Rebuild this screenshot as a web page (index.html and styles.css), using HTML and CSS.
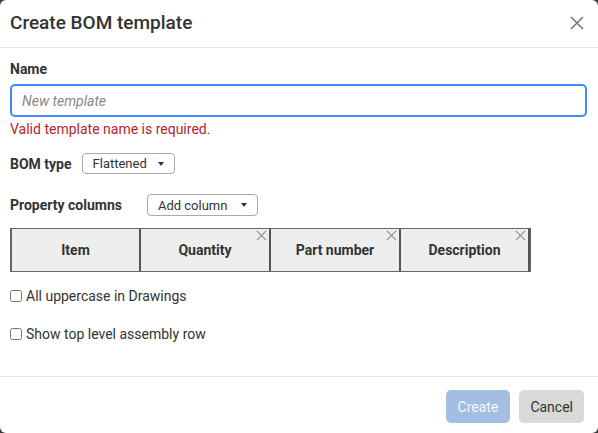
FILE: index.html
```html
<!DOCTYPE html>
<html lang="en">
<head>
    <meta charset="UTF-8">
    <title>Create BOM template</title>
    <link rel="stylesheet" href="styles.css">
</head>
<body>
    <div class="dialog">
        <div class="dialog-header">
            <h1>Create BOM template</h1>
            <button class="close-btn" type="button" aria-label="Close">
                <svg width="14" height="14" viewBox="0 0 14 14"><path d="M1 1L13 13M13 1L1 13" stroke="#777" stroke-width="1.6" fill="none"/></svg>
            </button>
        </div>

        <div class="dialog-body">
            <label class="field-label" for="template-name">Name</label>
            <input type="text" id="template-name" class="text-input" placeholder="New template">
            <div class="error-message">Valid template name is required.</div>

            <div class="inline-row bom-row">
                <span class="field-label">BOM type</span>
                <button type="button" class="dropdown-btn">Flattened <span class="caret"></span></button>
            </div>

            <div class="inline-row columns-row">
                <span class="field-label">Property columns</span>
                <button type="button" class="dropdown-btn add-col">Add column <span class="caret"></span></button>
            </div>

            <div class="columns-table">
                <div class="col-cell">Item</div>
                <div class="col-cell">Quantity<span class="remove-col"></span></div>
                <div class="col-cell">Part number<span class="remove-col"></span></div>
                <div class="col-cell">Description<span class="remove-col"></span></div>
            </div>

            <label class="check-row first">
                <input type="checkbox"> All uppercase in Drawings
            </label>
            <label class="check-row">
                <input type="checkbox"> Show top level assembly row
            </label>
        </div>

        <div class="dialog-footer">
            <button type="button" class="btn btn-primary" disabled>Create</button>
            <button type="button" class="btn btn-secondary">Cancel</button>
        </div>
    </div>
</body>
</html>
```

FILE: styles.css
```css
* {
    margin: 0;
    padding: 0;
    box-sizing: border-box;
    font-family: Roboto, 'Noto Sans', sans-serif;
}

body {
    background: #3a3a3a;
    width: 598px;
    height: 433px;
    overflow: hidden;
}

.dialog {
    width: 598px;
    height: 433px;
    background: #fff;
    border-radius: 6px;
    display: flex;
    flex-direction: column;
    color: #333;
}

.dialog-header {
    height: 48px;
    display: flex;
    align-items: center;
    justify-content: space-between;
    padding: 0 14px 2px 10px;
    border-bottom: 1px solid #e4e4e4;
}

.dialog-header h1 {
    font-size: 19px;
    font-weight: 500;
    color: #333;
}

.close-btn {
    background: none;
    border: none;
    display: flex;
    cursor: pointer;
}

.dialog-body {
    flex: 1;
    padding: 13px 11px 0 10px;
    display: flex;
    flex-direction: column;
    align-items: flex-start;
}

.field-label {
    font-size: 14px;
    font-weight: 700;
    color: #333;
}

.text-input {
    width: 100%;
    height: 33px;
    margin-top: 7px;
    padding: 0 10px;
    border: 2px solid #3d8bf7;
    border-radius: 5px;
    font-size: 14px;
    outline: none;
}

.text-input::placeholder {
    font-style: italic;
    color: #888;
}

.error-message {
    color: #b5232e;
    font-size: 14px;
    margin-top: 4px;
}

.inline-row {
    display: flex;
    align-items: center;
}

.bom-row {
    margin-top: 16px;
    gap: 10px;
}

.columns-row {
    margin-top: 20px;
    gap: 25px;
}

.dropdown-btn {
    display: flex;
    align-items: center;
    gap: 11px;
    background: #fff;
    border: 1px solid #aaa;
    border-radius: 4px;
    padding: 0 10px;
    height: 21px;
    font-size: 13px;
    color: #333;
}

.add-col {
    height: 22px;
    gap: 14px;
}

.caret {
    border-left: 3px solid transparent;
    border-right: 3px solid transparent;
    border-top: 4px solid #333;
}

.columns-table {
    display: flex;
    margin-top: 12px;
    border: 1px solid #666;
    border-left-width: 2px;
    background: #eeeeee;
}

.col-cell {
    position: relative;
    width: 130px;
    height: 42px;
    display: flex;
    align-items: center;
    justify-content: center;
    font-size: 14px;
    font-weight: 700;
    color: #333;
    border-right: 2px solid #555;
}

.col-cell:first-child {
    width: 129px;
}

.col-cell:last-child {
    width: 129px;
}

.remove-col {
    position: absolute;
    top: 1px;
    right: 2px;
    width: 11px;
    height: 11px;
}

.remove-col::before,
.remove-col::after {
    content: '';
    position: absolute;
    top: 5px;
    left: -1px;
    width: 13px;
    height: 1px;
    background: #888;
    transform: rotate(45deg);
}

.remove-col::after {
    transform: rotate(-45deg);
}

.check-row {
    display: flex;
    align-items: center;
    gap: 4px;
    font-size: 14px;
    color: #333;
}

.check-row.first {
    margin-top: 16px;
}

.check-row + .check-row {
    margin-top: 22px;
}

.check-row input {
    width: 12px;
    height: 12px;
    margin: 0;
}

.dialog-footer {
    height: 57px;
    border-top: 1px solid #e4e4e4;
    display: flex;
    justify-content: flex-end;
    align-items: center;
    gap: 9px;
    padding: 3px 14px 0 0;
}

.btn {
    height: 33px;
    border: none;
    border-radius: 5px;
    font-size: 14px;
    padding: 0 11px;
}

.btn-primary {
    background: #a3bde3;
    color: #f4f7fc;
    padding: 0 12px;
}

.btn-secondary {
    background: #d9d9d9;
    color: #333;
}
```
